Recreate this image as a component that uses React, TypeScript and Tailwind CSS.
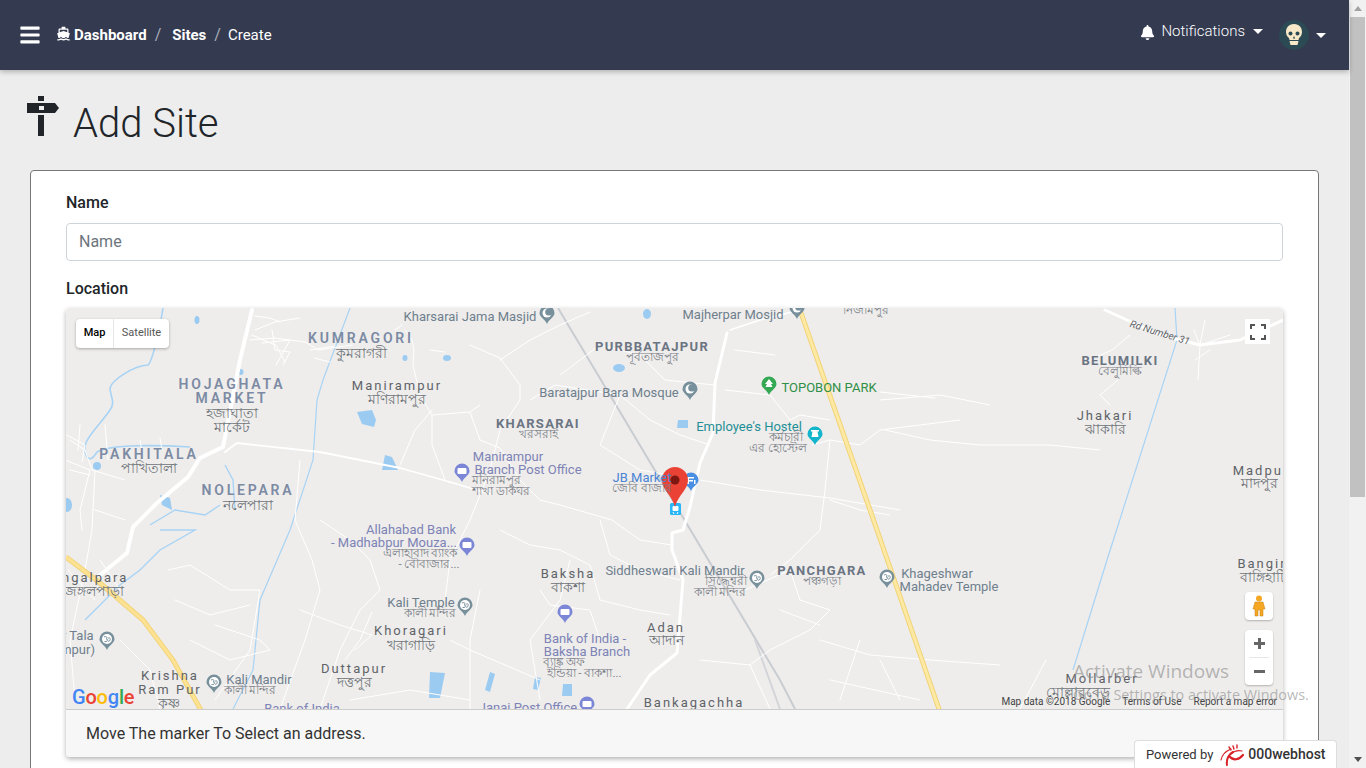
import { FaBars, FaBell } from "react-icons/fa";
import { MdDirectionsBoat } from "react-icons/md";

type Kind = "area" | "areaSm" | "town" | "bn" | "poi" | "bank" | "park" | "hostel" | "shop" | "bnPoi";

const kindClass: Record<Kind, string> = {
  area: "text-[14px] font-semibold tracking-[2.8px] text-[#7c8aa3]",
  areaSm: "text-[13px] font-bold tracking-[1.3px] text-[#6b7482]",
  town: "text-[13px] tracking-[2px] text-[#5f6368]",
  bn: "text-[14px] text-[#6f7479]",
  poi: "text-[13px] text-[#6f7f8d]",
  bank: "text-[13px] text-[#7d83b5]",
  park: "text-[13px] text-[#2f8f46]",
  hostel: "text-[13px] text-[#1f8f96]",
  shop: "text-[13px] text-[#4a84d4]",
  bnPoi: "text-[11.5px] text-[#7b8088]",
};

// cx, cy are in page pixels
const labels: [number, number, string, Kind][] = [
  [470, 316, "Kharsarai Jama Masjid", "poi"],
  [733, 314, "Majherpar Mosjid", "poi"],
  [866, 311, "নিজামপুর", "bnPoi"],
  [361, 338, "KUMRAGORI", "area"],
  [361, 353, "কুমরাগরী", "bn"],
  [652, 346, "PURBBATAJPUR", "areaSm"],
  [652, 358, "পূর্বতাজপুর", "bnPoi"],
  [1120, 360, "BELUMILKI", "areaSm"],
  [1120, 372, "বেলুমিল্কি", "bnPoi"],
  [232, 384, "HOJAGHATA", "area"],
  [232, 398, "MARKET", "area"],
  [232, 413, "হজাঘাতা", "bn"],
  [232, 427, "মার্কেট", "bn"],
  [397, 385, "Manirampur", "town"],
  [397, 399, "মণিরামপুর", "bn"],
  [609, 392, "Baratajpur Bara Mosque", "poi"],
  [829, 387, "TOPOBON PARK", "park"],
  [538, 423, "KHARSARAI", "areaSm"],
  [538, 435, "খরসরাই", "bnPoi"],
  [1105, 415, "Jhakari", "town"],
  [1105, 429, "ঝাকারি", "bn"],
  [749, 426, "Employee's Hostel", "hostel"],
  [786, 438, "কর্মচারী", "bnPoi"],
  [778, 449, "এর হোস্টেল", "bnPoi"],
  [149, 454, "PAKHITALA", "area"],
  [149, 468, "পাখিতালা", "bn"],
  [508, 456, "Manirampur", "bank"],
  [528, 469, "Branch Post Office", "bank"],
  [496, 481, "মনিরামপুর", "bnPoi"],
  [501, 492, "শাখা ডাকঘর", "bnPoi"],
  [1261, 470, "Madpur", "town"],
  [1259, 483, "মাদপুর", "bn"],
  [642, 477, "JB Market", "shop"],
  [642, 489, "জেবি বাজার", "bnPoi"],
  [248, 490, "NOLEPARA", "area"],
  [248, 505, "নলেপারা", "bn"],
  [411, 529, "Allahabad Bank", "bank"],
  [394, 542, "- Madhabpur Mouza...", "bank"],
  [420, 554, "এলাহাবাদ ব্যাংক", "bnPoi"],
  [429, 565, "- বৌবাজার...", "bnPoi"],
  [568, 573, "Baksha", "town"],
  [568, 587, "বাকশা", "bn"],
  [675, 570, "Siddheswari Kali Mandir", "poi"],
  [726, 582, "সিদ্ধেশ্বরী", "bnPoi"],
  [720, 593, "কালী মন্দির", "bnPoi"],
  [822, 570, "PANCHGARA", "areaSm"],
  [822, 582, "পঞ্চগড়া", "bnPoi"],
  [937, 573, "Khageshwar", "poi"],
  [949, 586, "Mahadev Temple", "poi"],
  [1262, 563, "Bangir", "town"],
  [1264, 577, "বাঙ্গিহাটি", "bn"],
  [86, 577, "Jangalpara", "town"],
  [94, 591, "জঙ্গলপাড়া", "bn"],
  [421, 602, "Kali Temple", "poi"],
  [430, 614, "কালী মন্দির", "bnPoi"],
  [585, 638, "Bank of India -", "bank"],
  [587, 651, "Baksha Branch", "bank"],
  [564, 663, "ব্যাঙ্ক অফ", "bnPoi"],
  [584, 674, "ইন্ডিয়া - বাকশা...", "bnPoi"],
  [411, 630, "Khoragari", "town"],
  [411, 645, "খরাগাড়ি", "bn"],
  [666, 627, "Adan", "town"],
  [666, 640, "আদান", "bn"],
  [70, 635, "Bor Tala", "poi"],
  [70, 649, "Rampur)", "poi"],
  [170, 675, "Krishna", "town"],
  [170, 689, "Ram Pur", "town"],
  [169, 703, "কৃষ্ণ", "bn"],
  [259, 679, "Kali Mandir", "poi"],
  [250, 691, "কালী মন্দির", "bnPoi"],
  [354, 668, "Duttapur", "town"],
  [354, 682, "দত্তপুর", "bn"],
  [302, 708, "Bank of India", "bank"],
  [1102, 678, "Mollarber", "town"],
  [1078, 692, "মোল্লারবেড়", "bn"],
  [528, 707, "Janai Post Office", "bank"],
  [694, 702, "Bankagachha", "town"],
];

type Pin = [number, number, string, "om" | "moon" | "mail" | "tree" | "fork" | "bed"];

const pins: Pin[] = [
  [547, 314, "#78909c", "moon"],
  [797, 309, "#78909c", "moon"],
  [690, 390, "#78909c", "moon"],
  [769, 385, "#34a853", "tree"],
  [815, 435, "#12b5cb", "bed"],
  [462, 472, "#7b86d6", "mail"],
  [691, 481, "#4a90e2", "fork"],
  [467, 546, "#7b86d6", "mail"],
  [757, 579, "#78909c", "om"],
  [887, 578, "#78909c", "om"],
  [465, 606, "#78909c", "om"],
  [565, 613, "#7b86d6", "mail"],
  [107, 640, "#78909c", "om"],
  [214, 683, "#78909c", "om"],
  [587, 705, "#7b86d6", "mail"],
];

const minorRoads = [
  "M255 330 L275 322 L300 318 M262 343 L290 340 L276 365 M276 345 L285 362 M275 338 L305 342 L318 350 L352 345",
  "M255 316 L270 318 L280 322 M272 330 L275 350 L290 352 L283 365 M250 340 L275 338 M252 335 L275 345",
  "M67 435 L85 445 L82 462 M65 460 L90 470 L85 490 L80 510 L82 530 M80 425 L78 450 M105 425 L108 460 M140 440 L142 452 M160 438 L162 450",
  "M310 350 L335 346 M314 358 L330 362 M395 330 L402 325 M405 330 L412 340 L414 350 L413 365 L420 395 L432 415 L432 445 L445 480 L450 483",
  "M430 350 L445 352 M432 415 L470 412 L480 440 L500 448 L520 480 L540 500 L560 505 L612 520 L640 540 L672 545",
  "M432 410 L415 430 L400 465 M470 412 L480 405 M500 360 L530 340 L560 325 L590 312",
  "M470 345 L500 358 L520 385 L520 400 L500 430 L490 470 L470 520 L450 560 L445 600",
  "M530 400 L555 385 L620 395 L600 445 L640 470 L670 475 M560 375 L600 345 L640 355 L665 380 L715 385",
  "M620 395 L650 420 L680 435 L710 445 M725 390 L770 395 L790 420 L800 415 L830 420 M735 350 L775 355",
  "M700 480 L760 490 L830 498 L900 510 M812 445 L830 440 L860 445 L880 430 L960 420 M830 440 L825 490 L820 530 L790 560 L770 575",
  "M830 500 L860 510 L890 515 M880 400 L940 395 L990 405 M980 445 L1020 445 L1050 445 L1100 450",
  "M500 530 L530 545 L560 550 L590 565 L600 600 L640 610 L670 615 M600 520 L610 555 L640 570 L680 580",
  "M540 590 L550 605 L590 610 L600 640 M570 560 L560 600 L530 640 L540 700 M480 590 L470 640 L470 709 M450 640 L470 650 L540 680",
  "M300 460 L295 520 L312 560 L320 590 L305 640 L280 709 M320 520 L350 540 L370 560 L380 590 L360 610 L340 650 L320 709",
  "M372 612 L360 640 L345 660 M300 610 L340 625 L372 635 L355 650 M215 625 L260 640 L270 650 L230 660 L190 640 M350 700 L410 690 L470 700",
  "M168 570 L190 565 L230 590 L260 590 L250 650 L215 700 M175 600 L210 615 L250 605 M68 570 L95 600 M95 470 L92 530 L85 570 L70 640 L75 700",
  "M70 440 L85 450 L92 470 L125 480 M70 470 L90 475 M95 510 L125 520 M100 560 L120 590 M120 640 L150 670 L160 709",
  "M745 590 L790 570 L800 600 L830 610 L810 630 L770 650 L750 665 L700 660 M780 610 L820 625 M750 665 L770 709",
  "M820 640 L870 655 L930 660 L1000 665 M860 640 L840 700 M880 660 L900 700 M830 680 L920 700",
  "M1090 360 L1112 350 L1130 335 M1110 405 L1100 395 L1118 380 M1194 330 L1200 345 L1198 380 M1195 360 L1210 350 M1205 320 L1200 345 L1230 335",
  "M1046 660 L1020 709 M880 392 L935 398 M885 430 L930 440 L980 445",
];

function MapPin({ pin }: { pin: Pin }) {
  const [x, y, color, glyph] = pin;
  return (
    <g transform={`translate(${x} ${y})`}>
      <path d="M-7.5 -1 A7.5 7.5 0 1 1 7.5 -1 C7.5 3 2 5 0 10 C-2 5 -7.5 3 -7.5 -1 Z" fill={color} />
      {glyph === "moon" && (
        <>
          <circle cx={0} cy={-1} r={4.5} fill="#fff" />
          <circle cx={1.8} cy={-2} r={3.6} fill={color} />
        </>
      )}
      {glyph === "om" && (
        <>
          <circle cx={0} cy={-1} r={5} fill="#fff" />
          <path d="M-3 -3 C0 -4.5 1 -1.5 -1 -1 C2 -1 1 2 -2.5 1.5 M1 -1.5 C2 -3 4 -2 3 0 C2.5 1.5 1.5 1.5 1 1" fill="none" stroke={color} strokeWidth={1} />
        </>
      )}
      {glyph === "mail" && <rect x={-4.5} y={-4} width={9} height={6} rx={1} fill="#fff" />}
      {glyph === "tree" && <path d="M0 -6 L4 -1 H2 L3.5 2 H-3.5 L-2 -1 H-4 Z" fill="#fff" />}
      {glyph === "bed" && <path d="M-4 -5 H4 V-3.5 H2.5 L3.5 2 H-3.5 L-2.5 -3.5 H-4 Z" fill="#fff" />}
      {glyph === "fork" && <path d="M-4 -4 H3 V-2.5 H-2 V-1 H2 V0.5 H-2 V3 H-4 Z M3 -1 H4.5 V3 H3 Z" fill="#fff" />}
    </g>
  );
}

function MapDrawing() {
  return (
    <svg className="absolute inset-0 h-full w-full" viewBox="66 308 1217 401">
      {/* water */}
      <g fill="#9ccbf2">
        <path d="M357 412 L372 410 L376 420 L374 427 L362 424 Z" />
        <path d="M385 455 L392 457 L398 470 L382 470 Z" />
        <path d="M160 495 L170 498 L172 510 L162 505 Z" />
        <path d="M430 672 L445 673 L440 698 L429 698 Z" />
        <path d="M490 672 L495 674 L490 692 L485 690 Z" />
        <path d="M535 677 L541 678 L538 690 L533 689 Z" />
        <path d="M563 684 L572 684 L572 696 L562 696 Z" />
        <path d="M678 420 L688 420 L688 428 L677 428 Z" />
        <ellipse cx={619} cy={368} rx={6} ry={4} />
        <ellipse cx={97} cy={466} rx={4} ry={4} />
        <ellipse cx={447} cy={358} rx={4} ry={3} />
        <ellipse cx={405} cy={358} rx={2.5} ry={3} />
        <ellipse cx={647} cy={314} rx={4} ry={5} />
        <ellipse cx={241} cy={372} rx={2.5} ry={3} />
        <ellipse cx={197} cy={320} rx={2.5} ry={4} />
        <ellipse cx={67} cy={505} rx={5} ry={7} />
      </g>
      <g fill="none" stroke="#a8d3f4" strokeWidth={1.2}>
        <path d="M163 308 C160 330 152 362 148 365 C133 366 112 380 110 388 C110 396 116 402 110 410 C100 425 82 440 85 452 C88 462 92 460 97 452 C110 444 160 445 190 447" strokeWidth={1.6} />
        <path d="M350 308 L323 380 L317 400 L313 460 L290 530 L260 600 L253 670 L233 709" />
        <path d="M1175 308 L1177 340 L1107 560 L1073 670" />
        <path d="M225 465 L233 480 L235 510 M150 525 L175 510 L205 515 L220 505 M160 530 L195 530 L160 550 L140 570 L120 585 L85 620" strokeWidth={1.4} />
      </g>
      {/* railway */}
      <path d="M558 308 L780 680 L795 709" fill="none" stroke="#c9ccd1" strokeWidth={2} />
      <path d="M755 640 L780 709" fill="none" stroke="#d3d5d9" strokeWidth={2} />
      {/* roads */}
      <g fill="none" stroke="#fff" strokeLinejoin="round" strokeLinecap="round">
        <path d="M252 310 L240 360 L223 447 L200 458 L188 477 L157 503 L133 527 L127 553 L100 575" strokeWidth={4} />
        <path d="M225 452 L237 443 L320 452 L400 468 L450 482 L490 494" strokeWidth={1.8} />
        <path d="M727 333 L715 383 L713 433 L700 463 L690 507 L683 530 L672 533 L672 550 L683 580 L677 653 L650 675 L627 709" strokeWidth={3} />
        <path d="M1105 310 L1160 335 L1200 345 L1240 340 L1283 320" strokeWidth={3} />
        <path d="M800 310 L760 320 L730 330" strokeWidth={1.5} />
        <g strokeWidth={1}>
          {minorRoads.map((d, i) => (
            <path key={i} d={d} />
          ))}
        </g>
      </g>
      {/* highways */}
      <g fill="none" strokeLinecap="butt">
        <path d="M800 310 L877 530 L940 712" stroke="#f2d376" strokeWidth={5} />
        <path d="M800 310 L877 530 L940 712" stroke="#fde9a4" strokeWidth={3} />
        <path d="M66 557 L100 583 L143 620 L173 660 L202 712" stroke="#f2d376" strokeWidth={5} />
        <path d="M66 557 L100 583 L143 620 L173 660 L202 712" stroke="#fde293" strokeWidth={3} />
      </g>
      {pins.map((p, i) => (
        <MapPin key={i} pin={p} />
      ))}
      {/* train stop under the marker */}
      <rect x={670} y={503} width={11} height={12} rx={1.5} fill="#29b6f6" />
      <rect x={672.5} y={506} width={6} height={5} rx={1} fill="#fff" />
      <path d="M673 512 L674 514 M678 512 L677 514" stroke="#fff" strokeWidth={1} />
      {/* marker */}
      <path d="M675 507 C672 495 662 490 662 480 A13 13 0 1 1 688 480 C688 490 678 495 675 507 Z" fill="#ea4335" />
      <circle cx={675} cy={480} r={4.5} fill="#7c1712" />
    </svg>
  );
}

function Caret() {
  return <span className="h-0 w-0 border-x-[5px] border-t-[5px] border-x-transparent border-t-white" />;
}

function SkullAvatar() {
  return (
    <svg width={30} height={30} viewBox="0 0 30 30">
      <circle cx={15} cy={15} r={15} fill="#2b4a53" />
      <path d="M15 4 C9.5 4 7 8 7 12 C7 15 8.5 17 10 18 L10.5 20 H19.5 L20 18 C21.5 17 23 15 23 12 C23 8 20.5 4 15 4 Z" fill="#f7e9c8" />
      <path d="M10.5 21 H19.5 L18.5 25 H11.5 Z" fill="#f7e9c8" />
      <circle cx={11.5} cy={13.5} r={2} fill="#2b4a53" />
      <circle cx={18.5} cy={13.5} r={2} fill="#2b4a53" />
      <path d="M15 16 L13.8 18.5 H16.2 Z" fill="#2b4a53" />
    </svg>
  );
}

function SignpostIcon() {
  return (
    <svg width={33} height={40} viewBox="0 0 33 40" className="shrink-0">
      <rect x={11} y={0} width={6} height={5} fill="#212529" />
      <path d="M0 7 H28 L32 12 L28 17 H0 Z" fill="#212529" />
      <rect x={12} y={10} width={5} height={4} fill="#ededed" />
      <rect x={11} y={19} width={6} height={21} fill="#212529" />
    </svg>
  );
}

function WebhostLogo() {
  return (
    <svg width={24} height={24} viewBox="0 0 24 24" fill="none" stroke="#d8232a" strokeLinecap="round">
      <path d="M11 6 C6 8 2 12 1 17" strokeWidth={1.2} />
      <path d="M13 9 C9 11 6 16 7 22" strokeWidth={2} />
      <path d="M9 13 C13 18 19 17 23 12" strokeWidth={2.2} />
      <path d="M13 3 L14 6 M17 2 L17 5 M9 4 L11 7" strokeWidth={1.4} />
      <path d="M11 11 C14 8 18 7 22 8" strokeWidth={1.2} />
    </svg>
  );
}

function Pegman() {
  return (
    <svg width={14} height={22} viewBox="0 0 14 22">
      <circle cx={7} cy={3.5} r={3} fill="#f5a623" />
      <path d="M3 7 H11 L13 14 H11 V21 H8 V15 H6 V21 H3 V14 H1 Z" fill="#f5a623" stroke="#c77f12" strokeWidth={0.5} />
    </svg>
  );
}

export default function App() {
  return (
    <div className="relative flex h-screen overflow-hidden bg-[#ededed] font-['Roboto',sans-serif] text-[#212529]">
      <div className="min-w-0 flex-1">
        <header className="relative z-10 flex h-[70px] items-center justify-between bg-[#343a50] pl-5 pr-[23px] text-white shadow-[0_2px_5px_rgba(0,0,0,0.25)]">
          <div className="flex items-center">
            <FaBars className="h-[22px] w-5" />
            <MdDirectionsBoat className="ml-4 mb-1 h-[15px] w-[15px]" />
            <span className="ml-[3px] text-[15px] font-bold">Dashboard</span>
            <span className="ml-2 text-[16px] text-[#a9adb8]">/</span>
            <span className="ml-[11px] text-[15px] font-bold">Sites</span>
            <span className="ml-2 text-[16px] text-[#a9adb8]">/</span>
            <span className="ml-[7px] text-[15px]">Create</span>
          </div>
          <div className="flex items-center">
            <FaBell className="mb-[6px] h-[15px] w-[15px]" />
            <span className="mb-2 ml-[6px] text-[15px] font-light">Notifications</span>
            <span className="mb-2 ml-2 flex"><Caret /></span>
            <span className="ml-4"><SkullAvatar /></span>
            <span className="ml-[7px] flex"><Caret /></span>
          </div>
        </header>

        <main className="px-[30px]">
          <div className="flex h-[100px] items-center">
            <span className="-ml-[3px] mb-2"><SignpostIcon /></span>
            <h1 className="ml-[13px] mt-2 text-[40px] font-light leading-none">Add Site</h1>
          </div>

          <section className="rounded border border-[#777] bg-white px-[35px] pt-[22px] pb-6">
            <label className="block text-[16px] font-medium leading-5">Name</label>
            <div className="mt-[10px] flex h-[38px] items-center rounded border border-[#ced4da] px-3 text-[16px] text-[#6c757d]">Name</div>
            <label className="mt-[18px] block text-[16px] font-medium leading-5">Location</label>
            <div className="mt-[9px] overflow-hidden rounded shadow-[0_2px_5px_rgba(0,0,0,0.3)]">
              <div className="relative h-[401px] overflow-hidden bg-[#eeedec]">
                <MapDrawing />
                {labels.map(([cx, cy, text, kind], i) => (
                  <span
                    key={i}
                    className={`absolute -translate-x-1/2 -translate-y-1/2 whitespace-nowrap leading-none ${kindClass[kind]}`}
                    style={{ left: cx - 66, top: cy - 308 }}
                  >
                    {text}
                  </span>
                ))}
                <span className="absolute left-[1063px] top-[17px] rotate-[17deg] whitespace-nowrap text-[10px] italic text-[#5f6368]">Rd Number 31</span>

                <div className="absolute left-[10px] top-[11px] flex h-[29px] items-center rounded-sm bg-white text-[11px] shadow-[0_1px_3px_rgba(0,0,0,0.3)]">
                  <span className="flex h-full w-[38px] items-center justify-center border-r border-[#e6e6e6] font-medium text-black">Map</span>
                  <span className="flex h-full w-[55px] items-center justify-center text-[#565656]">Satellite</span>
                </div>

                <div className="absolute left-[1179px] top-[11px] flex h-[25px] w-[25px] items-center justify-center bg-white">
                  <svg width={16} height={16} viewBox="0 0 16 16" fill="none" stroke="#555" strokeWidth={2}>
                    <path d="M1 5 V1 H5 M11 1 H15 V5 M15 11 V15 H11 M5 15 H1 V11" />
                  </svg>
                </div>

                <div className="absolute left-[1179px] top-[284px] flex h-7 w-7 items-center justify-center rounded-sm bg-white shadow-[0_1px_2px_rgba(0,0,0,0.25)]">
                  <Pegman />
                </div>

                <div className="absolute left-[1179px] top-[322px] flex h-[55px] w-7 flex-col items-center rounded-sm bg-white shadow-[0_1px_2px_rgba(0,0,0,0.25)]">
                  <svg className="mt-[8px]" width={11} height={11} viewBox="0 0 11 11" fill="#666">
                    <path d="M4 0 H7 V4 H11 V7 H7 V11 H4 V7 H0 V4 H4 Z" />
                  </svg>
                  <span className="mt-[8px] h-px w-5 bg-[#e6e6e6]" />
                  <span className="mt-[12px] h-[3px] w-[11px] bg-[#666]" />
                </div>

                <div className="absolute bottom-[2px] left-[6px] flex text-[20px] font-medium leading-none tracking-[-0.2px]">
                  <span className="text-[#4285f4]">G</span>
                  <span className="text-[#ea4335]">o</span>
                  <span className="text-[#fbbc05]">o</span>
                  <span className="text-[#4285f4]">g</span>
                  <span className="text-[#34a853]">l</span>
                  <span className="text-[#ea4335]">e</span>
                </div>

                <div className="absolute bottom-[1px] right-[6px] flex gap-3 text-[10px] leading-3 text-[#444]">
                  <span>Map data ©2018 Google</span>
                  <span>Terms of Use</span>
                  <span>Report a map error</span>
                </div>
              </div>
              <div className="flex h-[48px] items-center border-t border-[#ccc] bg-[#f7f7f7] px-5 text-[16px] text-[#333]">
                Move The marker To Select an address.
              </div>
            </div>
          </section>
        </main>
      </div>

      {/* scrollbar */}
      <div className="flex w-[17px] shrink-0 flex-col items-center bg-[#f1f1f1]">
        <span className="mt-[6px] h-0 w-0 border-x-[4px] border-b-[5px] border-x-transparent border-b-[#a3a3a3]" />
        <span className="mt-[6px] h-[480px] w-[15px] bg-[#c1c1c1]" />
        <span className="mb-[6px] mt-auto h-0 w-0 border-x-[4px] border-t-[5px] border-x-transparent border-t-[#505050]" />
      </div>

      {/* windows watermark */}
      <div className="pointer-events-none absolute left-[1073px] top-[658px] z-20 whitespace-nowrap font-['Open_Sans',sans-serif] text-[#8a8a8a]/60">
        <div className="text-[19px] leading-[27px]">Activate Windows</div>
        <div className="text-[14.4px] leading-[19px]">Go to Settings to activate Windows.</div>
      </div>

      {/* hosting badge */}
      <div className="absolute bottom-0 left-[1134px] z-30 flex h-7 w-[203px] items-center rounded-t border border-b-0 border-[#dedede] bg-white pl-[11px] text-[13px] text-[#333]">
        <span>Powered by</span>
        <span className="ml-[7px]"><WebhostLogo /></span>
        <span className="ml-1 text-[14px] font-medium">000webhost</span>
      </div>
    </div>
  );
}
